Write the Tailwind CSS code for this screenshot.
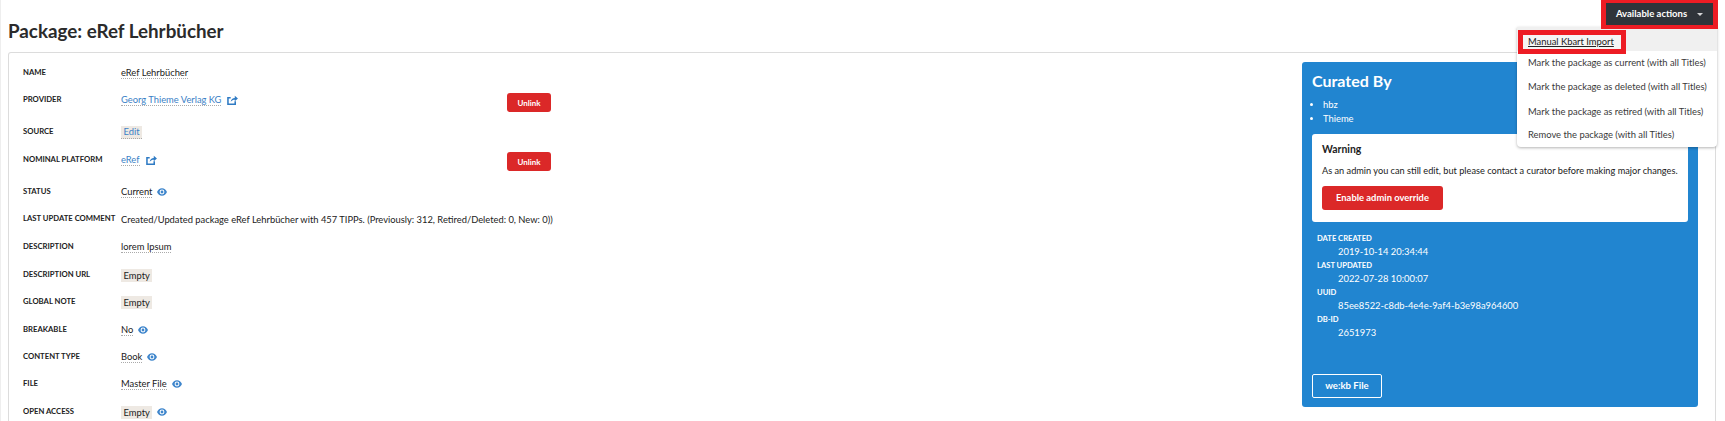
<!DOCTYPE html>
<html lang="en">
  <head>
    <meta charset="UTF-8" />
    <title>Package: eRef Lehrbücher</title>
    <script src="https://cdn.jsdelivr.net/npm/@tailwindcss/browser@4"></script>
  </head>
  <body class="bg-white h-[421px] overflow-hidden relative border-l border-[#eeeeee] font-['Lato',sans-serif] text-[#212121]">
    <!-- Header -->
    <div class="h-[52px] pl-[7px]">
      <h1 class="font-bold text-[18.8px] leading-[24px] pt-[19px] text-[#2b2b2b]">Package: eRef Lehrbücher</h1>
    </div>

    <!-- Dropdown -->
    <div class="absolute left-[1516px] top-[27px] w-[200px] h-[120px] bg-white shadow-[0_1px_3px_rgba(0,0,0,0.3)] rounded-b-sm text-[9.4px] text-[#3a3a3a] z-10">
      <div class="h-[24px] bg-[#f0f0f0]"></div>
      <div class="pl-[11px] h-[24px] flex items-center whitespace-nowrap">Mark the package as current (with all Titles)</div>
      <div class="pl-[11px] h-[24.5px] flex items-center whitespace-nowrap">Mark the package as deleted (with all Titles)</div>
      <div class="pl-[11px] h-[24.5px] flex items-center whitespace-nowrap">Mark the package as retired (with all Titles)</div>
      <div class="pl-[11px] h-[23px] flex items-center whitespace-nowrap">Remove the package (with all Titles)</div>
      <div class="absolute left-[1px] top-[3px] w-[108px] h-[24px] border-[5px] border-[#ed1c24] bg-[#f5f5f5] flex items-center pl-[5px] underline text-[#222] whitespace-nowrap">Manual Kbart Import</div>
    </div>

    <!-- Actions -->
    <div class="absolute left-[1600px] top-0 w-[117px] h-[29px] border-x-[5px] border-t-[3px] border-b-[4px] border-[#ed1c24] z-20">
      <div class="bg-[#2f343a] h-full flex items-center justify-center gap-[10px] text-white text-[9.5px] font-bold whitespace-nowrap">
        Available actions
        <span class="w-0 h-0 border-x-[3px] border-x-transparent border-t-[3px] border-t-white/80"></span>
      </div>
    </div>

    <!-- Card -->
    <div class="ml-[7px] w-[1708px] h-[369px] border border-b-0 border-[#dcdcdc] rounded-t-[3px] flex">
      <div class="w-[1293px] pl-[14px] pt-[10px] text-[9.35px]">
        <div class="h-[20px] mb-[7px] flex items-center"><span class="w-[98px] text-[7.7px] font-bold uppercase whitespace-nowrap">Name</span><span class="border-b border-dotted border-[#aaa] leading-[11px]">eRef Lehrbücher</span></div>

        <div class="h-[20px] mb-[12px] flex items-center"><span class="w-[98px] text-[7.7px] font-bold uppercase whitespace-nowrap">Provider</span>
          <div class="w-[386px] flex items-center"><a class="border-b border-dotted border-[#aaa] leading-[11px] text-[#3a7fc6]">Georg Thieme Verlag KG</a>
            <svg class="ml-[6px] w-[11px] h-[10px] text-[#2f7bc4]" viewBox="0 0 12 11" fill="none" stroke="currentColor" stroke-width="1.7"><path d="M9 7V10.2H1V3H4"/><path d="M4 7.5C4.3 4.8 6.2 3.2 8.5 3.2V0.8L12 3.9L8.5 7V5.1C6.8 5.1 5.2 5.8 4 7.5Z" fill="currentColor" stroke="none"/></svg></div>
          <span class="mt-[5px] w-[44px] h-[19px] rounded-[3px] bg-[#db2828] text-white text-[8px] font-bold flex items-center justify-center">Unlink</span></div>

        <div class="h-[20px] mb-[8px] flex items-center"><span class="w-[98px] text-[7.7px] font-bold uppercase whitespace-nowrap">Source</span><span class="bg-[#eee9e3] border-b border-dotted border-[#aaa] px-[2.5px] leading-[12px] text-[#3a7fc6]">Edit</span></div>

        <div class="h-[20px] mb-[12px] flex items-center"><span class="w-[98px] text-[7.7px] font-bold uppercase whitespace-nowrap">Nominal Platform</span>
          <div class="w-[386px] flex items-center"><a class="border-b border-dotted border-[#aaa] leading-[11px] text-[#3a7fc6]">eRef</a>
            <svg class="ml-[6px] w-[11px] h-[10px] text-[#2f7bc4]" viewBox="0 0 12 11" fill="none" stroke="currentColor" stroke-width="1.7"><path d="M9 7V10.2H1V3H4"/><path d="M4 7.5C4.3 4.8 6.2 3.2 8.5 3.2V0.8L12 3.9L8.5 7V5.1C6.8 5.1 5.2 5.8 4 7.5Z" fill="currentColor" stroke="none"/></svg></div>
          <span class="mt-[3px] w-[44px] h-[19px] rounded-[3px] bg-[#db2828] text-white text-[8px] font-bold flex items-center justify-center">Unlink</span></div>

        <div class="h-[20px] mb-[7px] flex items-center"><span class="w-[98px] text-[7.7px] font-bold uppercase whitespace-nowrap">Status</span><span class="border-b border-dotted border-[#aaa] leading-[11px]">Current</span>
          <svg class="ml-[5px] w-[10px] h-[8px] text-[#3f86cc]" viewBox="0 0 12 9"><path fill="currentColor" fill-rule="evenodd" d="M6 0C3.2 0 1.2 2 0 4.5C1.2 7 3.2 9 6 9S10.8 7 12 4.5C10.8 2 8.8 0 6 0ZM6 1.6A2.9 2.9 0 1 1 6 7.4A2.9 2.9 0 0 1 6 1.6Z"/><circle cx="6" cy="4.5" r="1.7" fill="currentColor"/></svg></div>

        <div class="h-[20px] mb-[8px] flex items-center"><span class="w-[98px] text-[7.7px] font-bold uppercase whitespace-nowrap">Last Update Comment</span><span class="leading-[11px]">Created/Updated package eRef Lehrbücher with 457 TIPPs. (Previously: 312, Retired/Deleted: 0, New: 0))</span></div>

        <div class="h-[20px] mb-[8px] flex items-center"><span class="w-[98px] text-[7.7px] font-bold uppercase whitespace-nowrap">Description</span><span class="border-b border-dotted border-[#aaa] leading-[11px]">lorem Ipsum</span></div>

        <div class="h-[20px] mb-[7px] flex items-center"><span class="w-[98px] text-[7.7px] font-bold uppercase whitespace-nowrap">Description URL</span><span class="bg-[#eee9e3] px-[2.5px] leading-[13px]">Empty</span></div>

        <div class="h-[20px] mb-[8px] flex items-center"><span class="w-[98px] text-[7.7px] font-bold uppercase whitespace-nowrap">Global Note</span><span class="bg-[#eee9e3] px-[2.5px] leading-[13px]">Empty</span></div>

        <div class="h-[20px] mb-[7px] flex items-center"><span class="w-[98px] text-[7.7px] font-bold uppercase whitespace-nowrap">Breakable</span><span class="border-b border-dotted border-[#aaa] leading-[11px]">No</span>
          <svg class="ml-[5px] w-[10px] h-[8px] text-[#3f86cc]" viewBox="0 0 12 9"><path fill="currentColor" fill-rule="evenodd" d="M6 0C3.2 0 1.2 2 0 4.5C1.2 7 3.2 9 6 9S10.8 7 12 4.5C10.8 2 8.8 0 6 0ZM6 1.6A2.9 2.9 0 1 1 6 7.4A2.9 2.9 0 0 1 6 1.6Z"/><circle cx="6" cy="4.5" r="1.7" fill="currentColor"/></svg></div>

        <div class="h-[20px] mb-[7px] flex items-center"><span class="w-[98px] text-[7.7px] font-bold uppercase whitespace-nowrap">Content Type</span><span class="border-b border-dotted border-[#aaa] leading-[11px]">Book</span>
          <svg class="ml-[5px] w-[10px] h-[8px] text-[#3f86cc]" viewBox="0 0 12 9"><path fill="currentColor" fill-rule="evenodd" d="M6 0C3.2 0 1.2 2 0 4.5C1.2 7 3.2 9 6 9S10.8 7 12 4.5C10.8 2 8.8 0 6 0ZM6 1.6A2.9 2.9 0 1 1 6 7.4A2.9 2.9 0 0 1 6 1.6Z"/><circle cx="6" cy="4.5" r="1.7" fill="currentColor"/></svg></div>

        <div class="h-[20px] mb-[8px] flex items-center"><span class="w-[98px] text-[7.7px] font-bold uppercase whitespace-nowrap">File</span><span class="border-b border-dotted border-[#aaa] leading-[11px]">Master File</span>
          <svg class="ml-[5px] w-[10px] h-[8px] text-[#3f86cc]" viewBox="0 0 12 9"><path fill="currentColor" fill-rule="evenodd" d="M6 0C3.2 0 1.2 2 0 4.5C1.2 7 3.2 9 6 9S10.8 7 12 4.5C10.8 2 8.8 0 6 0ZM6 1.6A2.9 2.9 0 1 1 6 7.4A2.9 2.9 0 0 1 6 1.6Z"/><circle cx="6" cy="4.5" r="1.7" fill="currentColor"/></svg></div>

        <div class="h-[20px] flex items-center"><span class="w-[98px] text-[7.7px] font-bold uppercase whitespace-nowrap">Open Access</span><span class="bg-[#eee9e3] px-[2.5px] leading-[13px]">Empty</span>
          <svg class="ml-[5px] w-[10px] h-[8px] text-[#3f86cc]" viewBox="0 0 12 9"><path fill="currentColor" fill-rule="evenodd" d="M6 0C3.2 0 1.2 2 0 4.5C1.2 7 3.2 9 6 9S10.8 7 12 4.5C10.8 2 8.8 0 6 0ZM6 1.6A2.9 2.9 0 1 1 6 7.4A2.9 2.9 0 0 1 6 1.6Z"/><circle cx="6" cy="4.5" r="1.7" fill="currentColor"/></svg></div>
      </div>

      <!-- Curated By panel -->
      <div class="w-[396px] h-[345px] mt-[9px] bg-[#2185d0] rounded-[3px] text-white flex flex-col px-[10px] text-[9.4px]">
        <h2 class="font-bold text-[16px] leading-[22px] mt-[8px]">Curated By</h2>
        <ul class="list-disc pl-[11px] mt-[6px] leading-[14px]">
          <li>hbz</li>
          <li>Thieme</li>
        </ul>
        <div class="mt-[8px] h-[88px] shrink-0 bg-white rounded-[3px] text-[#212121] px-[10px] pt-[8px]">
          <div class="text-[10.4px] font-bold leading-[15px]">Warning</div>
          <p class="text-[9.2px] leading-[14px] mt-[7px] whitespace-nowrap">As an admin you can still edit, but please contact a curator before making major changes.</p>
          <div class="mt-[8px] w-[121px] h-[24px] rounded-[3px] bg-[#db2828] text-white font-bold flex items-center justify-center">Enable admin override</div>
        </div>
        <dl class="pl-[5px] mt-[10px]">
          <dt class="text-[7.6px] font-bold uppercase leading-[13px]">Date Created</dt>
          <dd class="pl-[21px] leading-[14px]">2019-10-14 20:34:44</dd>
          <dt class="text-[7.6px] font-bold uppercase leading-[13px]">Last Updated</dt>
          <dd class="pl-[21px] leading-[14px]">2022-07-28 10:00:07</dd>
          <dt class="text-[7.6px] font-bold uppercase leading-[13px]">UUID</dt>
          <dd class="pl-[21px] leading-[14px]">85ee8522-c8db-4e4e-9af4-b3e98a964600</dd>
          <dt class="text-[7.6px] font-bold uppercase leading-[13px]">DB-ID</dt>
          <dd class="pl-[21px] leading-[14px]">2651973</dd>
        </dl>
        <div class="mt-auto mb-[9px] w-[70px] h-[24px] border border-white rounded-[2px] text-[9.6px] font-bold flex items-center justify-center">we:kb File</div>
      </div>
    </div>
  </body>
</html>
